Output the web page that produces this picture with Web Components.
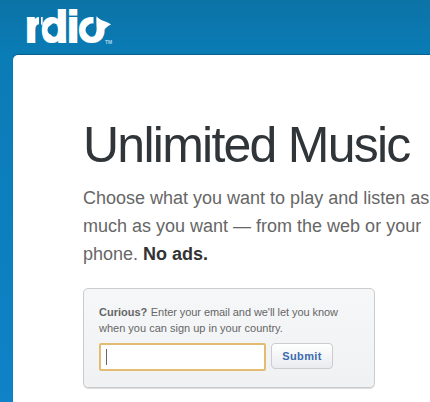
<!DOCTYPE html>
<html><head><meta charset="utf-8"><style>
html,body{margin:0;padding:0;height:402px;overflow:hidden}
body{background:linear-gradient(#0c73a6 0,#0a7cb6 55px,#0f82c8 402px);font-family:"Liberation Sans",Arial,sans-serif}
.l{display:block;white-space:nowrap}
.l.strong b{color:#333}
.tight{margin-left:.5px;letter-spacing:-.07px}
</style></head><body>
<rdio-page>
<rdio-logo slot="logo"></rdio-logo>
<rdio-hero>
<span slot="title">Unlimited Music</span>
<span class="l">Choose what you want to play and listen as</span>
<span class="l">much as you want — from the web or your</span>
<span class="l strong"><span>phone.</span> <b>No ads.</b></span>
</rdio-hero>
<signup-box>
<span class="l"><b>Curious?</b> <span class="tight">Enter your email and we'll let you know</span></span>
<span class="l">when you can sign up in your country.</span>
</signup-box>
</rdio-page>
<script>
function def(name,html){customElements.define(name,class extends HTMLElement{constructor(){super();this.attachShadow({mode:'open'}).innerHTML=html}})}
def('rdio-page',`<style>
:host{display:block;height:402px;overflow:hidden}
header{height:55px;padding-left:27px;box-sizing:border-box}
main{margin-left:13px;width:600px;height:347px;box-sizing:border-box;background:#fff;border-radius:5px 0 0 0;padding:62px 0 0 70px;box-shadow:0 -1px 1px rgba(0,50,80,.4)}
</style><header><slot name="logo"></slot></header><main><slot></slot></main>`);
def('rdio-logo',`<style>
:host{display:block;height:55px;padding-top:2px;box-sizing:border-box}
.w{position:relative;width:88px;height:50px}
span{display:block;font:700 44px/50px "Liberation Sans",Arial,sans-serif;color:#fff;letter-spacing:-1px;-webkit-text-stroke:2px #fff;white-space:nowrap;margin-left:-2px}
small{position:absolute;left:78px;top:37px;font:700 5px/6px "Liberation Sans",Arial,sans-serif;color:#a8d4ea}
svg{position:absolute;left:0;top:0;overflow:visible}
</style><div class="w"><span>rdio</span><svg width="90" height="50" viewBox="27 2 90 50"><path d="M40 16V27" stroke="#0a76ae" stroke-width="2" fill="none"/><circle cx="52.500" cy="30" r="5" fill="#0a76ae"/><circle cx="91" cy="30" r="5.500" fill="#0a76ae"/><path d="M95 15V29" stroke="#0a76ae" stroke-width="3" fill="none"/><path d="M96.500 16C99 21 105 20 111 24.500C107 26.500 104 29 103 32L97 27Z" fill="#fff"/></svg><small>TM</small></div>`);
def('rdio-hero',`<style>
:host{display:block;width:360px;color:#666}
h1{margin:0;font:400 50px/56px "Liberation Sans",Arial,sans-serif;letter-spacing:-1.75px;color:#30353a;white-space:nowrap}
p{margin:11px 0 0;font:18px/28px "Liberation Sans",Arial,sans-serif;width:350px}
</style><h1><slot name="title"></slot></h1><p><slot></slot></p>`);
def('signup-box',`<style>
:host{display:block;width:292px;height:100px;margin-top:20px;box-sizing:border-box;border:1px solid #ccc;border-radius:5px;background:linear-gradient(#f6f7f8,#eff1f3);padding:15px 15px 0;font:11px/16px "Liberation Sans",Arial,sans-serif;color:#666;box-shadow:0 1px 0 #ddd}
.r{display:flex;align-items:flex-start;gap:5px;margin-top:7px}
.i{width:167px;height:28px;box-sizing:border-box;border:2px solid #e3bc72;border-radius:2px;background:#fff;display:flex;align-items:center;padding-left:5px}
.i i{display:block;width:1px;height:16px;background:#666}
button{width:62px;height:26px;padding:0;border:1px solid #ccc;border-radius:4px;background:linear-gradient(#fff,#e9ebee);font:700 11px "Liberation Sans",Arial,sans-serif;color:#3b6cb0;letter-spacing:.4px}
</style><div><slot></slot></div><div class="r"><div class="i"><i></i></div><button>Submit</button></div>`);
</script></body></html>
